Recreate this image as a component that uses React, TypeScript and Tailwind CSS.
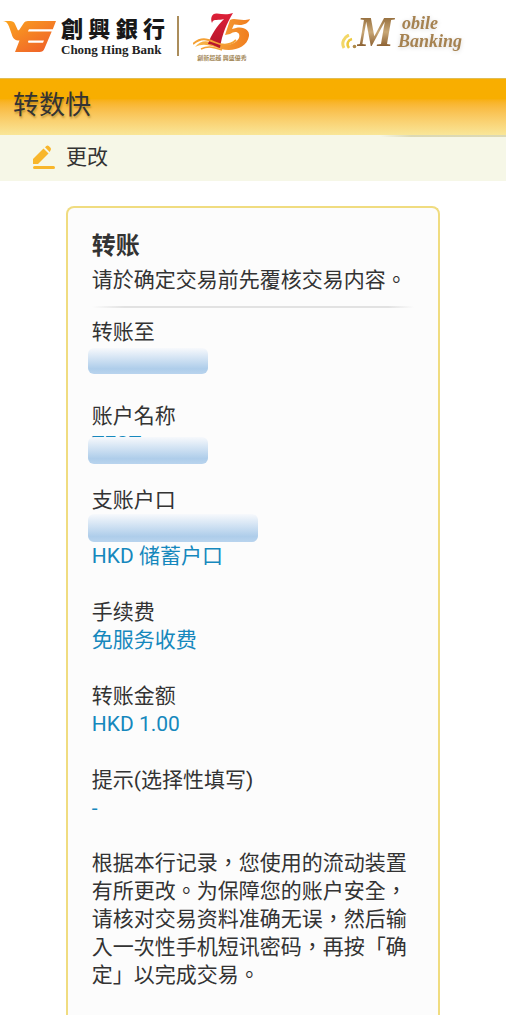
import clsx from 'clsx'

type Field = {
  label: string
  value?: string
  masked?: 'short' | 'long' | 'over'
}

const fields: Field[] = [
  { label: '转账至', masked: 'short' },
  { label: '账户名称', masked: 'over', value: 'TEST' },
  { label: '支账户口', masked: 'long', value: 'HKD 储蓄户口' },
  { label: '手续费', value: '免服务收费' },
  { label: '转账金额', value: 'HKD 1.00' },
  { label: '提示(选择性填写)', value: '-' },
]

function BankMark() {
  return (
    <svg viewBox="0 0 54 33" className="w-[54px] h-[33px] shrink-0" aria-hidden="true">
      <defs>
        <linearGradient id="mark" x1="0" y1="0" x2="1" y2="1">
          <stop offset="0" stopColor="#fba51f" />
          <stop offset="1" stopColor="#ee5a2a" />
        </linearGradient>
      </defs>
      <path
        d="M0 1H7C9.5 1 11 1.8 12 4L14.500 9.500Q15.300 11.200 16.500 9.500L20.500 3.500C21.800 1.700 23 1 25 1H53L49.800 9.200H26L24.800 11.500H48.700L41.500 28.500C40.300 31.300 39 32 36.500 32H12L16.500 20.500C12 20.500 10 18.500 8.800 14.500L6 6.500C4.700 3 3 1.400 0 1Z"
        fill="url(#mark)"
      />
      <path d="M25.500 20.500H41L40 22.800H26.500C25 22.800 24.600 22 25.500 20.500Z" fill="#fff" />
    </svg>
  )
}

function AnniversaryMark() {
  return (
    <svg viewBox="0 0 58 40" className="w-[58px] h-10" aria-hidden="true">
      <defs>
        <linearGradient id="red" x1="0" y1="0" x2="0" y2="1">
          <stop offset="0" stopColor="#de2038" />
          <stop offset="1" stopColor="#b3152a" />
        </linearGradient>
        <linearGradient id="gold" x1="0" y1="0" x2="1" y2="0">
          <stop offset="0" stopColor="#f9b94a" />
          <stop offset="1" stopColor="#f07c1d" />
        </linearGradient>
      </defs>
      <path
        d="M2 35C9 27 15 29 22 32C30 34 42 34 46 26C48 20 42 18 37 22L32 23L37 8C42 5 48 10 57 7C55 12 50 14 41 12.500L39 17C49 13 57 17 56 24C54 36 40 40 28 37C19 34 11 30 2 35Z"
        fill="url(#gold)"
      />
      <path
        d="M19 11C17 6 19 1 24 1.500C29 2 34 3 40 1C34 11 29 22 27 36C23 35 20 32 15 32C18 23 24 14 31 7C26 9 20 6 19 11Z"
        fill="url(#red)"
      />
      <path d="M0 32C8 25 14 27 21 30C30 34 38 33 43 28" fill="none" stroke="#f4a034" strokeWidth="1.800" />
      <path d="M8 37C16 33 23 36 29 38" fill="none" stroke="#f4a034" strokeWidth="1.500" />
    </svg>
  )
}

function MobileBanking() {
  return (
    <div className="flex items-end font-['Liberation_Serif',serif] italic font-bold" aria-label="Mobile Banking">
      <svg viewBox="0 0 16 16" className="w-4 h-4" fill="none" aria-hidden="true">
        <path d="M3 14C0 9 3 3 8 1" stroke="#f3d766" strokeWidth="3" />
        <path d="M8 14C5 10 7 6 11 5" stroke="#edca3f" strokeWidth="2.500" />
        <circle cx="13.500" cy="12.500" r="1.800" fill="#b08a48" />
      </svg>
      <span className="bg-linear-to-b from-[#8a6230] via-[#c9a877] to-[#7c4f1f] bg-clip-text pr-1 text-[42px] leading-9 text-transparent">M</span>
      <span className="flex flex-col text-[18px] leading-[18px] text-[#a68250] drop-shadow-sm">
        <span className="pl-1">obile</span>
        <span>Banking</span>
      </span>
    </div>
  )
}

function PencilIcon() {
  return (
    <svg viewBox="0 0 24 26" className="w-6 h-[26px]" fill="#f8b62b" aria-hidden="true">
      <path d="M1 19V14L11.500 3.500L16.500 8.500L6 19Z" />
      <path d="M13 2.200L14.300 1Q15.500 0 16.800 1L18.500 2.800Q19.500 4 18.600 5.200L17.700 7Z" />
      <rect x="1" y="21" width="22" height="3" rx="1.500" />
    </svg>
  )
}

function Header() {
  return (
    <header className="flex h-[78px] items-start justify-between bg-white pt-3 pl-[3px] pr-11">
      <div className="flex items-start">
        <div className="flex items-start gap-1 pt-2">
          <BankMark />
          <div className="w-[104px]">
            <div lang="zh-Hant" className="flex justify-between text-[22px] leading-5 font-black text-[#181818]">
              <span>創</span>
              <span>興</span>
              <span>銀</span>
              <span>行</span>
            </div>
            <div className="pt-1 font-['Liberation_Serif',serif] text-[13px] leading-3 font-bold whitespace-nowrap text-[#222]">Chong Hing Bank</div>
          </div>
        </div>
        <div className="ml-3 mt-1 h-10 w-[2px] bg-[#ab8d5b]" />
        <div className="ml-[14px] flex flex-col items-center">
          <AnniversaryMark />
          <p lang="zh-Hant" className="text-[6px] leading-3 font-bold whitespace-nowrap text-[#a58a5c]">創新超越 興盛優秀</p>
        </div>
      </div>
      <div className="pt-[2px]">
        <MobileBanking />
      </div>
    </header>
  )
}

function Mask({ size }: { size: 'short' | 'long' | 'over' }) {
  return (
    <div
      className={clsx(
        'rounded-md bg-linear-to-b from-[#f7f9fc] to-[#b9d4ee] via-[#aecdea] via-80%',
        size === 'short' && 'mt-[2px] -ml-1 h-[26px] w-[120px]',
        size === 'long' && '-ml-1 h-7 w-[170px]',
        size === 'over' && 'absolute top-[7px] -left-1 h-[27px] w-[120px]'
      )}
    />
  )
}

export default function App() {
  return (
    <div className="min-h-screen bg-white font-[Roboto,'Noto_Sans_CJK_TC',sans-serif] text-[#333]">
      <Header />
      <div className="h-[57px] border-t border-[#e0bd55] bg-linear-to-b from-[#f8ae00] from-35% to-[#f9e698] pl-[13px]">
        <h1 className="text-[26px] leading-[52px] text-shadow-[1px_2px_2px_rgb(120_80_0/0.4)]">转数快</h1>
      </div>
      <div className="relative h-[46px] bg-[#f6f7e7] pl-8">
        <div className="absolute top-0 right-0 h-[2px] w-1/4 bg-linear-to-r from-transparent via-[#dcd9b4] via-25% to-[#dcd9b4]" />
        <button type="button" className="flex h-full items-center gap-[10px] text-[21px]">
          <PencilIcon />
          更改
        </button>
      </div>

      <main className="mx-[13%] mt-[25px] rounded-t-lg border-2 border-b-0 border-[#f0dc80] bg-[#fcfcfc] px-6 pt-[22px] pb-12 text-[21px] leading-7">
        <h2 className="text-2xl leading-8 font-bold">转账</h2>
        <p className="mt-1 whitespace-nowrap">请於确定交易前先覆核交易内容。</p>
        <div className="mt-3 h-[2px] bg-[linear-gradient(to_right,transparent,#e2e2e2_10%,#e2e2e2_92%,transparent)]" />
        <dl className="mt-[10px] flex flex-col gap-7">
          {fields.map((f) => (
            <div key={f.label}>
              <dt>{f.label}</dt>
              <dd className="relative text-[#1688bd]">
                {f.masked && <Mask size={f.masked} />}
                {f.value}
              </dd>
            </div>
          ))}
        </dl>
        <p className="mt-[27px]">
          根据本行记录，您使用的流动装置有所更改。为保障您的账户安全，请核对交易资料准确无误，然后输入一次性手机短讯密码，再按「确定」以完成交易。
        </p>
      </main>
    </div>
  )
}
